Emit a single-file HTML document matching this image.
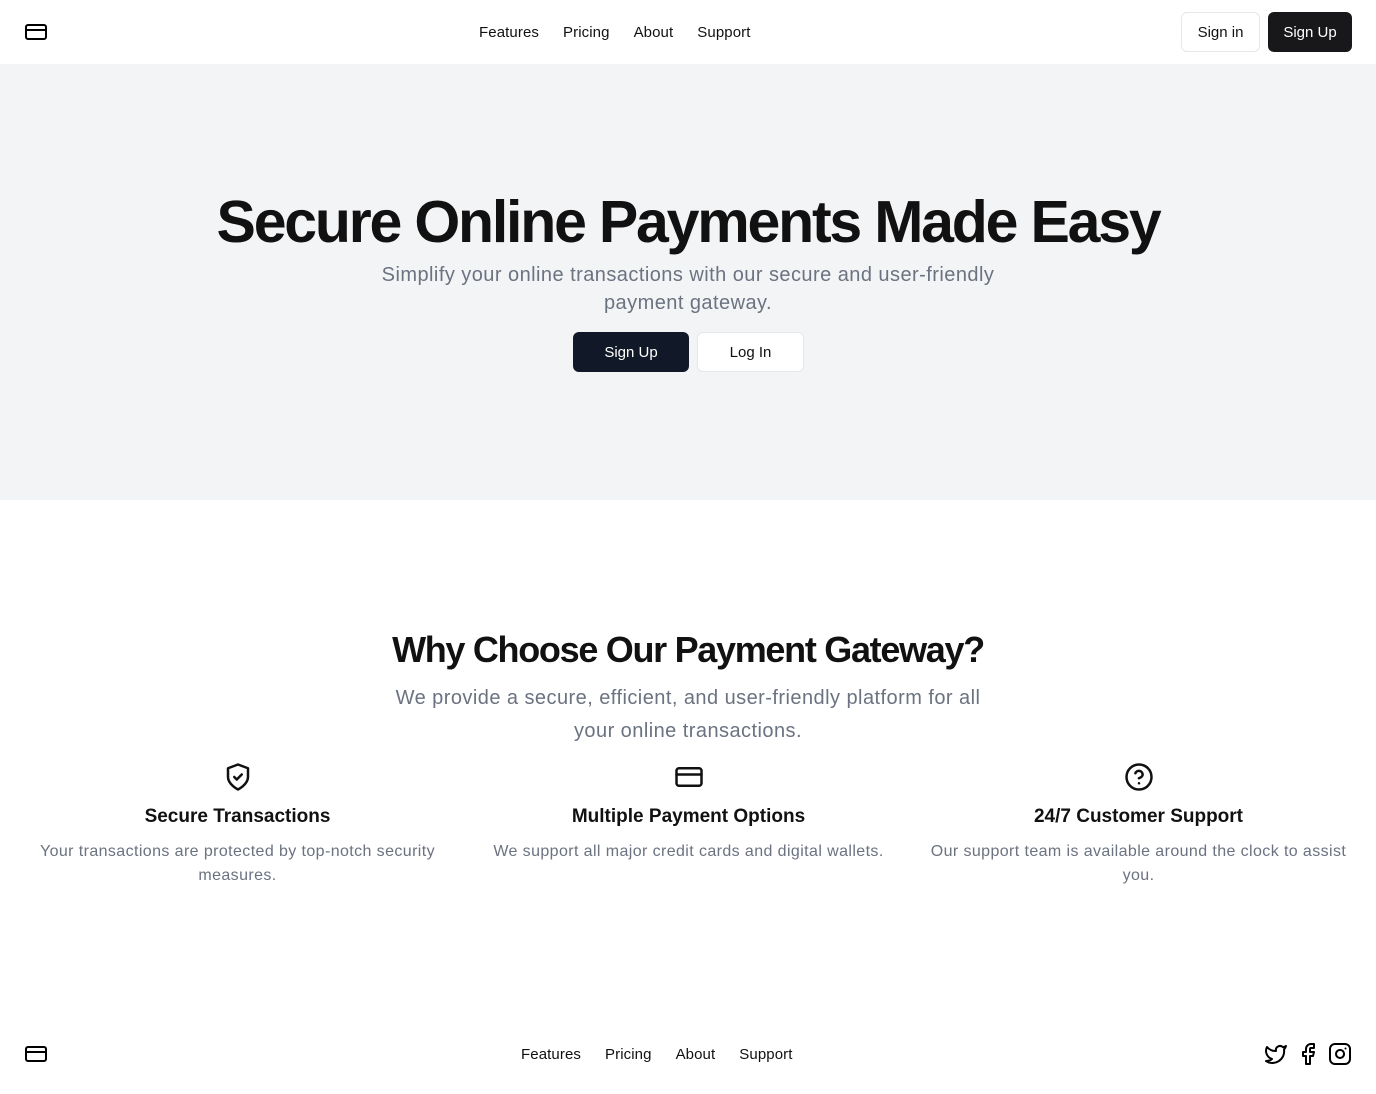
<!DOCTYPE html>
<html><head><meta charset="utf-8"><style>
*{box-sizing:border-box;margin:0;padding:0}
body{width:1376px;height:1094px;font-family:"Liberation Sans",sans-serif;color:#111;background:#fff;position:relative;overflow:hidden}
.nav{height:64px;position:relative}
.logo{position:absolute;left:24px;top:20px}
.links{position:absolute;top:0;height:64px;display:flex;align-items:center;gap:24px;font-size:15px;color:#111;letter-spacing:0.1px}
.btn{position:absolute;display:flex;align-items:center;justify-content:center;font-size:15px;border-radius:6px}
.hero{position:absolute;top:64px;left:0;width:1376px;height:436px;background:#f3f4f6;text-align:center}
h1{position:absolute;top:124px;width:100%;font-size:59px;font-weight:700;letter-spacing:-2.2px;line-height:68px}
.sub{position:absolute;top:197px;left:0;width:100%;font-size:20px;line-height:28px;color:#6b7280;letter-spacing:0.45px}
h2{position:absolute;top:628px;width:100%;text-align:center;font-size:36px;font-weight:700;letter-spacing:-1.3px;line-height:44px}
.sub2{position:absolute;top:682px;width:100%;text-align:center;font-size:20px;line-height:33px;color:#6b7280;letter-spacing:0.45px}
.col{position:absolute;top:762px;width:451px;text-align:center}
.col svg{display:block;margin:0 auto}
.col h3{margin-top:12px;font-size:19px;font-weight:700;line-height:26px}
.col p{margin-top:10px;font-size:16px;line-height:24px;color:#6b7280;padding:0 14px;letter-spacing:0.4px}
</style></head><body>
<div class="nav">
<svg class="logo" width="24" height="24" viewBox="0 0 24 24" fill="none" stroke="#000" stroke-width="2" stroke-linecap="round" stroke-linejoin="round"><rect x="2" y="5" width="20" height="14" rx="2"/><line x1="2" y1="10" x2="22" y2="10"/></svg>
<div class="links" style="left:479px"><span>Features</span><span>Pricing</span><span>About</span><span>Support</span></div>
<div class="btn" style="left:1181px;top:12px;width:79px;height:40px;border:1px solid #e5e7eb;background:#fff">Sign in</div>
<div class="btn" style="left:1268px;top:12px;width:84px;height:40px;background:#18181b;color:#fff">Sign Up</div>
</div>
<div class="hero">
<h1>Secure Online Payments Made Easy</h1>
<div class="sub">Simplify your online transactions with our secure and user-friendly<br>payment gateway.</div>
<div class="btn" style="left:573px;top:268px;width:116px;height:40px;background:#111827;color:#fff">Sign Up</div>
<div class="btn" style="left:697px;top:268px;width:107px;height:40px;background:#fff;border:1px solid #e5e7eb;color:#111">Log In</div>
</div>
<h2>Why Choose Our Payment Gateway?</h2>
<div class="sub2">We provide a secure, efficient, and user-friendly platform for all<br>your online transactions.</div>
<div class="col" style="left:12px">
<svg width="30" height="30" viewBox="0 0 24 24" fill="none" stroke="#111" stroke-width="2" stroke-linecap="round" stroke-linejoin="round"><path d="M12 22s8-4 8-10V5l-8-3-8 3v7c0 6 8 10 8 10z"/><path d="m9 12 2 2 4-4"/></svg>
<h3>Secure Transactions</h3><p>Your transactions are protected by top-notch security measures.</p></div>
<div class="col" style="left:463px">
<svg width="30" height="30" viewBox="0 0 24 24" fill="none" stroke="#111" stroke-width="2" stroke-linecap="round" stroke-linejoin="round"><rect x="2" y="5" width="20" height="14" rx="2"/><line x1="2" y1="10" x2="22" y2="10"/></svg>
<h3>Multiple Payment Options</h3><p>We support all major credit cards and digital wallets.</p></div>
<div class="col" style="left:913px">
<svg width="30" height="30" viewBox="0 0 24 24" fill="none" stroke="#111" stroke-width="2" stroke-linecap="round" stroke-linejoin="round"><circle cx="12" cy="12" r="10"/><path d="M9.1 9a3 3 0 0 1 5.8 1c0 2-3 3-3 3"/><path d="M12 17h.01"/></svg>
<h3>24/7 Customer Support</h3><p>Our support team is available around the clock to assist you.</p></div>
<div style="position:absolute;top:1022px;left:0;width:1376px;height:64px">
<svg class="logo" width="24" height="24" viewBox="0 0 24 24" fill="none" stroke="#000" stroke-width="2" stroke-linecap="round" stroke-linejoin="round" style="top:20px"><rect x="2" y="5" width="20" height="14" rx="2"/><line x1="2" y1="10" x2="22" y2="10"/></svg>
<div class="links" style="left:521px"><span>Features</span><span>Pricing</span><span>About</span><span>Support</span></div>
<svg style="position:absolute;left:1264px;top:20px" width="24" height="24" viewBox="0 0 24 24" fill="none" stroke="#000" stroke-width="2" stroke-linecap="round" stroke-linejoin="round"><path d="M22 4s-.7 2.1-2 3.4c1.6 10-9.4 17.3-18 11.6 2.2.1 4.4-.6 6-2C3 15.5.5 9.6 3 5c2.2 2.6 5.6 4.1 9 4-.9-4.2 4-6.6 7-3.8 1.1 0 3-1.2 3-1.2z"/></svg>
<svg style="position:absolute;left:1296px;top:20px" width="24" height="24" viewBox="0 0 24 24" fill="none" stroke="#000" stroke-width="2" stroke-linecap="round" stroke-linejoin="round"><path d="M18 2h-3a5 5 0 0 0-5 5v3H7v4h3v8h4v-8h3l1-4h-4V7a1 1 0 0 1 1-1h3z"/></svg>
<svg style="position:absolute;left:1328px;top:20px" width="24" height="24" viewBox="0 0 24 24" fill="none" stroke="#000" stroke-width="2" stroke-linecap="round" stroke-linejoin="round"><rect x="2" y="2" width="20" height="20" rx="5"/><path d="M16 11.4A4 4 0 1 1 12.6 8 4 4 0 0 1 16 11.4z"/><line x1="17.5" y1="6.5" x2="17.5" y2="6.5"/></svg>
</div>
</body></html>
